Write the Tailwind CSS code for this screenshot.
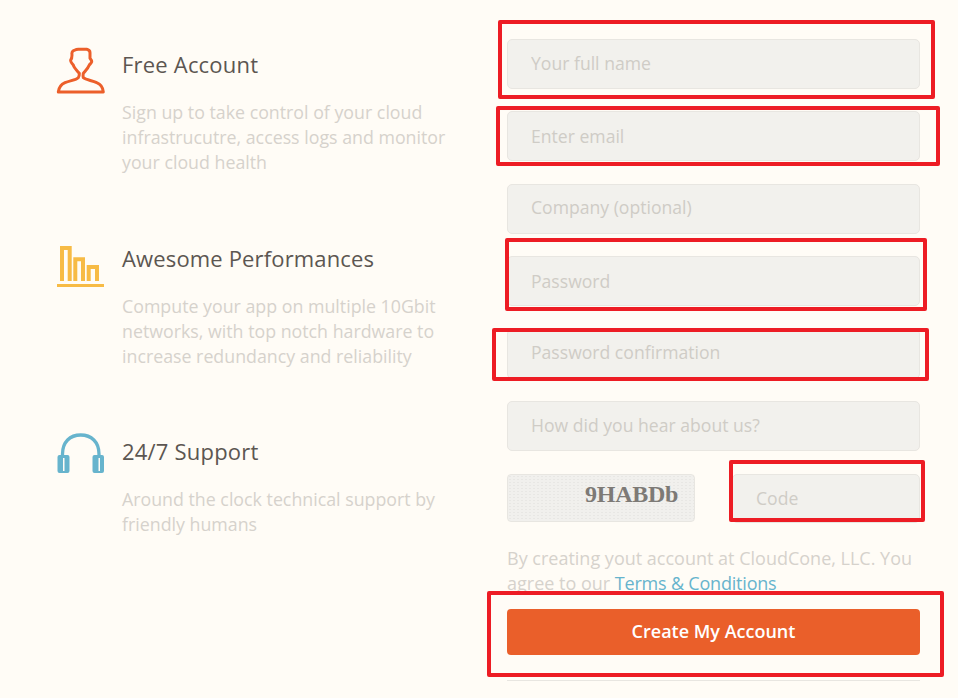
<!DOCTYPE html>
<html><head><meta charset="utf-8"><script src="https://cdn.jsdelivr.net/npm/@tailwindcss/browser@4"></script></head>
<body class="bg-[#fffcf6] font-['Open_Sans',sans-serif] overflow-hidden">
<div class="relative w-[958px] h-[698px] overflow-hidden flex">
  <div class="w-[507px] shrink-0 pl-[57px] pr-[50px] pt-[47px] flex flex-col gap-[18.700px]">
    <section class="h-[175px]">
      <div class="flex items-start h-[48px] gap-[18px]">
        <svg class="w-[47px] h-[48px] shrink-0 overflow-visible" viewBox="0 0 47 48" fill="none" stroke="#ec5f2a" stroke-width="3" stroke-linejoin="round"><path d="M1.300 45C2 39 5 37 8 35.700 13 33.500 19 33 21.300 30.700 22.500 29 22.300 27.500 22.300 26.300 20 23.500 17 21 16.300 18 14.500 16 13.200 14.500 13.700 13 15 11.500 15 9.500 15 8 14.500 5.500 15.500 3.700 17 3.500 18.500 2.800 20 2.300 21.300 2.300H29.700C32 2.800 33 4 33 5.700V11.300C34 12.500 34.700 13.500 34.700 14.700 34 16.500 33 17 32.300 18 31 21.500 28 24 26.300 26.300 26 28 26 29.500 26.300 30.700 29 33 35 33.500 39.700 35.700 43 37 45.800 39.500 46.300 45Z"/></svg>
        <h2 class="text-[22px] leading-[30px] mt-[2px] text-[#5c5651] tracking-[0.2px]">Free Account</h2>
      </div>
      <p class="ml-[65px] mt-[5px] text-[17.800px] leading-[25px] text-[#d6d2cc]">Sign up to take control of your cloud infrastrucutre, access logs and monitor your cloud health</p>
    </section>
    <section class="h-[175px]">
      <div class="flex items-start h-[48px] gap-[18px]">
        <svg class="w-[47px] h-[48px] shrink-0 overflow-visible" viewBox="0 0 47 48" fill="none" stroke="#f7bb45"><path d="M5 40V7H12.700V40M18.300 40V18.300H26V40M31.700 40V26H40V40" stroke-width="4"/><path d="M0 44.500H47" stroke-width="3"/></svg>
        <h2 class="text-[22px] leading-[30px] mt-[2px] text-[#5c5651] tracking-[0.15px]">Awesome Performances</h2>
      </div>
      <p class="ml-[65px] mt-[5px] text-[17.800px] leading-[25px] text-[#d6d2cc]">Compute your app on multiple 10Gbit networks, with top notch hardware to increase redundancy and reliability</p>
    </section>
    <section>
      <div class="flex items-start h-[48px] gap-[18px]">
        <svg class="w-[47px] h-[48px] shrink-0 overflow-visible" viewBox="0 0 47 48" fill="none" stroke="#67b4cd"><path d="M5.500 23V20C5.500 8 13 1 23.700 1S42 8 42 20V23" stroke-width="3.300"/><path fill-rule="evenodd" stroke="none" fill="#67b4cd" d="M2.500 21H10.500Q12.500 21 12.500 23V37Q12.500 39 10.500 39H2.500Q0.500 39 0.500 37V23Q0.500 21 2.500 21ZM6 24V37H7.500V24ZM37.500 21H45Q47 21 47 23V37Q47 39 45 39H37.500Q35.500 39 35.500 37V23Q35.500 21 37.500 21ZM41.500 24V37H43V24Z"/></svg>
        <h2 class="text-[22px] leading-[30px] mt-[2px] text-[#5c5651] tracking-[0.2px]">24/7 Support</h2>
      </div>
      <p class="ml-[65px] mt-[5px] text-[17.800px] leading-[25px] text-[#d6d2cc]">Around the clock technical support by friendly humans</p>
    </section>
  </div>
  <form class="w-[413px] shrink-0 pt-[39px]">
    <div class="flex flex-col gap-[22.400px]">
      <input class="h-[50px] w-full rounded-[5px] border border-[#e8e6e1] bg-[#f2f1ed] px-[23px] pb-[3px] text-[17.600px] placeholder:text-[#cfccc6]" placeholder="Your full name">
      <input class="h-[50px] w-full rounded-[5px] border border-[#e8e6e1] bg-[#f2f1ed] px-[23px] pb-[1px] text-[17.600px] placeholder:text-[#cfccc6]" placeholder="Enter email">
      <input class="h-[50px] w-full rounded-[5px] border border-[#e8e6e1] bg-[#f2f1ed] px-[23px] pb-[3px] text-[17.600px] placeholder:text-[#cfccc6]" placeholder="Company (optional)">
      <input class="h-[50px] w-full rounded-[5px] border border-[#e8e6e1] bg-[#f2f1ed] px-[23px] pb-[1px] text-[17.600px] placeholder:text-[#cfccc6]" placeholder="Password">
      <input class="h-[50px] w-full rounded-[5px] border border-[#e8e6e1] bg-[#f2f1ed] px-[23px] pb-[3px] text-[17.600px] placeholder:text-[#cfccc6]" placeholder="Password confirmation">
      <input class="h-[50px] w-full rounded-[5px] border border-[#e8e6e1] bg-[#f2f1ed] px-[23px] pb-[2px] text-[17.600px] placeholder:text-[#cfccc6]" placeholder="How did you hear about us?">
    </div>
    <div class="mt-[23px] flex justify-between">
      <div class="w-[188px] h-[48px] rounded-[4px] border border-[#e8e6e1] bg-[radial-gradient(circle,#e8e7e4_1px,#f1f0ed_1px)] bg-[length:4px_3px] flex items-center justify-end pr-[16px] pb-[8px]">
        <span class="font-['Liberation_Serif',serif] font-bold text-[24px] tracking-[-0.300px] text-[#7d7a76]">9HABDb</span>
      </div>
      <input class="w-[188px] h-[49px] rounded-[5px] border border-[#e8e6e1] bg-[#f2f1ed] px-[23px] text-[17.600px] placeholder:text-[#cfccc6]" placeholder="Code">
    </div>
    <p class="mt-[23px] text-[18px] leading-[25px] text-[#d6d2cc]">By creating yout account at CloudCone, LLC. You agree to our <a class="-tracking-[0.2px] text-[#67b4cd]">Terms &amp; Conditions</a></p>
    <button type="button" class="mt-[13px] w-full h-[46px] rounded-[4px] bg-[#ea5f2a] text-white font-semibold text-[18px]">Create My Account</button>
    <div class="mt-[25px] h-px bg-[#e8e6e1]"></div>
  </form>
  <div class="absolute left-[498px] top-[20px] w-[437px] h-[79px] border-4 border-[#ed1c24] rounded-[2px]"></div>
  <div class="absolute left-[496px] top-[106px] w-[444px] h-[60px] border-4 border-[#ed1c24] rounded-[2px]"></div>
  <div class="absolute left-[505px] top-[238px] w-[422px] h-[73px] border-4 border-[#ed1c24] rounded-[2px]"></div>
  <div class="absolute left-[492px] top-[328px] w-[437px] h-[53px] border-4 border-[#ed1c24] rounded-[2px]"></div>
  <div class="absolute left-[729px] top-[460px] w-[196px] h-[62px] border-4 border-[#ed1c24] rounded-[2px]"></div>
  <div class="absolute left-[487px] top-[591px] w-[457px] h-[86px] border-4 border-[#ed1c24] rounded-[2px]"></div>
</div>
</body></html>
